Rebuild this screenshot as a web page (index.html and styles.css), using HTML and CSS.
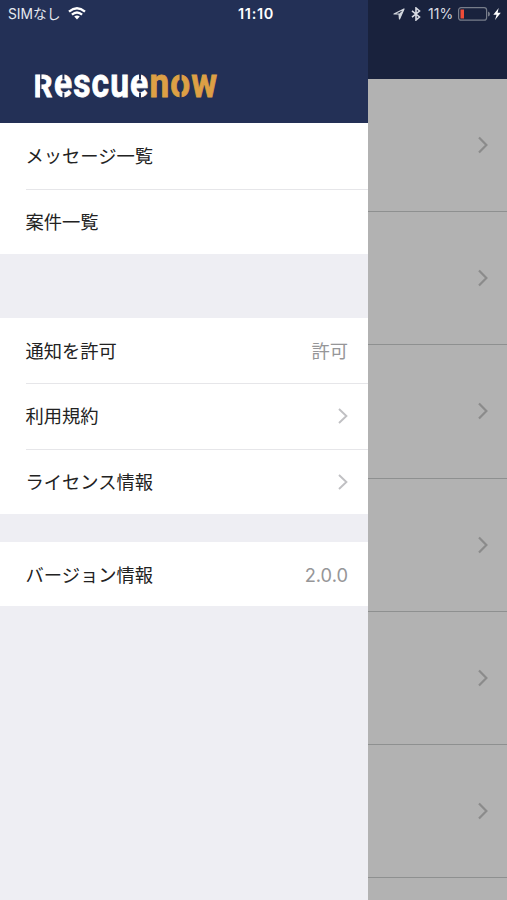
FILE: index.html
```html
<!DOCTYPE html>
<html lang="ja">
<head>
<meta charset="utf-8">
<title>RescueNow</title>
<link rel="stylesheet" href="styles.css">
</head>
<body>
<div class="screen">
  <aside class="drawer">
    <header class="brand">
      <div class="status">
        <span class="carrier">SIMなし</span>
        <svg class="wifi" width="18" height="13" viewBox="0 0 18 13"><g fill="none" stroke="#fff" stroke-width="2.3"><path d="M1 4.6Q9-2.2 17 4.6"/><path d="M3.9 7.7Q9 3.3 14.1 7.7"/></g><path fill="#fff" d="M6.2 9.6Q9 7.4 11.8 9.6L9 12.6Z"/></svg>
        <span class="clock">11:10</span>
      </div>
      <svg class="logo" width="230" height="60" viewBox="0 0 230 60">
        <g class="letters">
          <text class="white" transform="translate(.8 41) scale(.94 1)" font-size="31">R</text>
          <text class="white spaced" transform="translate(21 41) scale(.82 1)" font-size="41">escue</text>
          <text class="gold spaced" transform="translate(116.4 41) scale(.86 1)" font-size="41">now</text>
        </g>
        <path stroke="#233056" stroke-width="1.3" d="M7.8 17V43"/>
        <path stroke="#233056" stroke-width="2" d="M30.4 17V23.5M30.4 36.5V43M107 17V23.5M107 36.5V43M147.6 17V25M147.6 35V43"/>
      </svg>
    </header>
    <nav>
      <ul class="group">
        <li><span>メッセージ一覧</span></li>
        <li><span>案件一覧</span></li>
      </ul>
      <ul class="group settings">
        <li><span>通知を許可</span><span class="value">許可</span></li>
        <li><span>利用規約</span><svg class="chev" viewBox="0 0 11 18"><path d="M2 2 9.4 9 2 16"/></svg></li>
        <li><span>ライセンス情報</span><svg class="chev" viewBox="0 0 11 18"><path d="M2 2 9.4 9 2 16"/></svg></li>
      </ul>
      <ul class="group version">
        <li><span>バージョン情報</span><span class="value">2.0.0</span></li>
      </ul>
    </nav>
  </aside>
  <main class="behind">
    <header class="bar">
      <svg width="12" height="12" viewBox="0 0 12 12"><path fill="none" stroke="#d3d7de" stroke-width="1.2" stroke-linejoin="round" d="M1 6 11 1 6.5 11 6 6Z"/><path fill="#d3d7de" d="M6 6 11 1 6.5 11Z"/></svg>
      <svg class="bt" width="10" height="14" viewBox="0 0 10 14"><path fill="none" stroke="#d9dce3" stroke-width="1.6" d="M1 3.8 8.5 10 5 13V1L8.5 4 1 10.2"/></svg>
      <span class="pct">11%</span>
      <svg class="battery" width="32" height="14" viewBox="0 0 32 14"><rect x=".6" y=".6" width="28" height="12.6" rx="2.5" fill="none" stroke="#777d8a" stroke-width="1.2"/><path fill="#ef4c38" d="M2.5 2.5H6V11.5H2.5Z"/><path fill="#777d8a" d="M30 4.5q2 .5 2 2.5t-2 2.5z"/></svg>
      <svg class="bolt" width="8" height="12" viewBox="0 0 8 12"><path fill="#fff" d="M5.7 0 .3 6.7H3.6L2 12 7.8 4.8H4.6Z"/></svg>
    </header>
    <ul class="list">
      <li><svg class="chev" viewBox="0 0 11 18"><path d="M2 1.5 9.4 9 2 16.5"/></svg></li>
      <li><svg class="chev" viewBox="0 0 11 18"><path d="M2 1.5 9.4 9 2 16.5"/></svg></li>
      <li><svg class="chev" viewBox="0 0 11 18"><path d="M2 1.5 9.4 9 2 16.5"/></svg></li>
      <li><svg class="chev" viewBox="0 0 11 18"><path d="M2 1.5 9.4 9 2 16.5"/></svg></li>
      <li><svg class="chev" viewBox="0 0 11 18"><path d="M2 1.5 9.4 9 2 16.5"/></svg></li>
      <li><svg class="chev" viewBox="0 0 11 18"><path d="M2 1.5 9.4 9 2 16.5"/></svg></li>
      <li></li>
    </ul>
  </main>
</div>
</body>
</html>
```
FILE: styles.css
```css
* { box-sizing: border-box; }
body {
  margin: 0;
  font-family: Inter, "Noto Sans CJK JP", sans-serif;
  color: #222;
}
ul { list-style: none; margin: 0; padding: 0; }
svg { display: block; flex: none; }
.screen { display: flex; width: 507px; height: 900px; overflow: hidden; }
.drawer { width: 368px; flex: none; background: #eeeef3; }
.brand { height: 123px; background: #233056; color: #fff; }
.status { display: flex; align-items: center; height: 27px; padding-left: 8px; }
.carrier { width: 60px; font-size: 13.8px; line-height: 18px; white-space: nowrap; color: #e6e9f0; }
.clock { margin-left: 152px; font-size: 14.5px; font-weight: 600; line-height: 18px; letter-spacing: .7px; white-space: nowrap; }
.logo { margin: 29px 0 0 33px; }
.letters { font-family: Roboto, sans-serif; font-weight: 700; }
.white { fill: #fff; stroke: #fff; stroke-width: .8px; }
.gold { fill: #dda045; stroke: #dda045; stroke-width: .8px; }
.spaced { letter-spacing: 1.3px; }
.group { background: #fff; }
.group li {
  display: flex;
  align-items: center;
  justify-content: space-between;
  height: 65.5px;
  margin-left: 25.5px;
  padding-right: 20px;
  font-size: 18.3px;
  line-height: 26px;
}
.group li + li { border-top: 1px solid #e6e6e9; }
.settings { margin-top: 64px; }
.settings li:first-child { height: 65px; }
.version { margin-top: 28px; }
.version li { height: 64px; padding-top: 1px; }
.value { color: #969698; }
.chev { width: 11px; height: 18px; fill: none; stroke: #c0c0c3; stroke-width: 1.9; }
.behind { flex: 1; background: #b2b2b2; }
.bar {
  display: flex;
  align-items: center;
  height: 79px;
  padding: 0 5px 52px 25px;
  background: #19223d;
}
.bt { margin-left: 6px; }
.pct { width: 27px; margin-left: 7px; font-size: 14px; color: #d9dce3; }
.battery { margin-left: 3px; }
.bolt { margin-left: 3px; }
.list li {
  display: flex;
  align-items: center;
  justify-content: flex-end;
  height: 133.2px;
  padding-right: 19px;
  border-bottom: 1.5px solid #8e9090;
}
.list .chev { stroke: #8b8b8b; stroke-width: 2.2; }
```
